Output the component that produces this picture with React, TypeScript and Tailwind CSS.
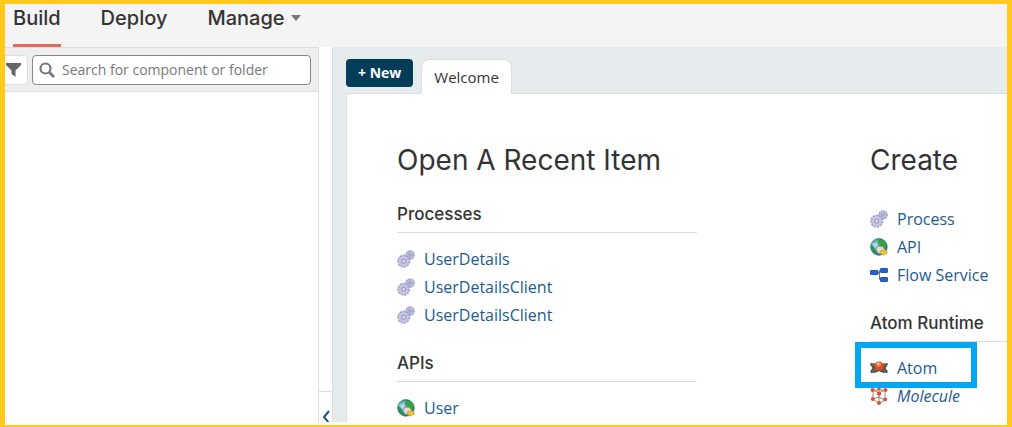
import { ReactNode } from "react";

const headingFont = "font-['Inter','Open_Sans',sans-serif]";

function ProcessIcon() {
  return (
    <svg viewBox="0 0 18 18" className="size-[18px] shrink-0" aria-hidden="true">
      <circle cx="13" cy="5" r="4" fill="#a9a9cf" stroke="#a0a0c0" strokeWidth="1.6" strokeDasharray="1.6 0.7" />
      <circle cx="13" cy="5" r="3.6" fill="#bcbce0" />
      <circle cx="13" cy="5" r="1.3" fill="#d0d0e8" stroke="#8585aa" strokeWidth="0.7" />
      <circle cx="6.7" cy="11.2" r="5.6" fill="#b4b4da" stroke="#a0a0c0" strokeWidth="1.8" strokeDasharray="2.2 0.9" />
      <circle cx="6.7" cy="11.2" r="5.2" fill="#c3c3e6" />
      <circle cx="6.7" cy="11.2" r="2" fill="#dcdcee" stroke="#8a8ab0" strokeWidth="0.9" />
    </svg>
  );
}

function ApiIcon() {
  return (
    <svg viewBox="0 0 18 18" className="size-[18px] shrink-0" aria-hidden="true">
      <defs>
        <radialGradient id="globe" cx="0.3" cy="0.4" r="0.7">
          <stop offset="0" stopColor="#cfe8f8" />
          <stop offset="0.5" stopColor="#4b98d0" />
          <stop offset="1" stopColor="#145084" />
        </radialGradient>
      </defs>
      <circle cx="8.9" cy="8.9" r="8.3" fill="url(#globe)" stroke="#2b6f78" strokeWidth="0.7" />
      <path d="M8.500 1.500 13 2l3.500 4-.3 5-2.700-.5-2-2.500-2.500-.5L8 5z" fill="#36a33f" />
      <path d="M1 7.500 3 8l2 3 2 5-4-1.500-1.700-3z" fill="#2d8f48" />
      <path d="m3 3.500 3-2 1.500.5L5 5z" fill="#5bb866" />
      <path d="m6 11.500 1.500-3.500 5 .5 2.700 3.500-2 4-5-.5z" fill="#deded9" stroke="#85867c" strokeWidth="0.8" />
      <path d="m9.500 15 1.700-3 1.800 1 1.200-2 3.300 3-1.200 2-1.500-.5-1 1.700z" fill="#f2c634" stroke="#b98f1c" strokeWidth="0.6" />
    </svg>
  );
}

function FlowIcon() {
  return (
    <svg viewBox="0 0 18 18" className="size-[18px] shrink-0" aria-hidden="true">
      <path d="M8 6.500h2m1.500-2H9.500v9h2" fill="none" stroke="#6a7280" />
      <rect x="0.5" y="4.5" width="7.500" height="4" rx="0.5" fill="#1d63dc" stroke="#2d559a" />
      <rect x="10.5" y="2.5" width="7" height="4" rx="0.5" fill="#1d63dc" stroke="#2d559a" />
      <rect x="10.5" y="11.5" width="7" height="4" rx="0.5" fill="#1d63dc" stroke="#2d559a" />
    </svg>
  );
}

function AtomIcon() {
  return (
    <svg viewBox="0 0 18 18" className="size-[18px] shrink-0" aria-hidden="true">
      <path d="M.5 4 5 4.500l4 2 4-2 4.500-.5.2 2-2.200 3 2.200 3-.5 2-4.200-.3-4-1.500-4 1.500-4.300.3-.4-2 2.200-3L.3 6z" fill="#56504d" />
      <path d="m2 5.500 14 7M16 5.500l-14 7" stroke="#85807c" strokeWidth="0.8" />
      <circle cx="9" cy="7" r="4.6" fill="#e04e1c" />
      <circle cx="8.6" cy="5.4" r="2.4" fill="#fb8752" />
      <circle cx="8.2" cy="4.7" r="1" fill="#ffd0b5" />
    </svg>
  );
}

function MoleculeIcon() {
  return (
    <svg viewBox="0 0 18 18" className="size-[18px] shrink-0" aria-hidden="true">
      <path d="M3 3h12v10l-6 3.500L3 12zM3 3l6 3 6-3M9 6v10M3 12l6-2 6 3" fill="none" stroke="#888" />
      <g fill="#e2512c">
        <circle cx="2.5" cy="3" r="2" />
        <circle cx="9" cy="1.800" r="1.800" />
        <circle cx="15.5" cy="3" r="2" />
        <circle cx="9" cy="6.500" r="2.200" />
        <circle cx="2.800" cy="12" r="2" />
        <circle cx="15.200" cy="12.500" r="2" />
        <circle cx="9" cy="16" r="2" />
      </g>
    </svg>
  );
}

function ItemLink({ icon, children }: { icon: ReactNode; children: ReactNode }) {
  return (
    <li className="h-7">
      <a href="#" className="inline-flex h-7 items-center gap-[9px] whitespace-nowrap text-base text-[#1a5b93]">
        {icon}
        <span>{children}</span>
      </a>
    </li>
  );
}

function Section({ title, className = "", children }: { title: string; className?: string; children: ReactNode }) {
  return (
    <section className={className}>
      <h3 className={`${headingFont} h-8 whitespace-nowrap border-b border-[#ddd] text-[17px] leading-[26px] font-medium text-[#333]`}>
        {title}
      </h3>
      <ul className="pt-3">{children}</ul>
    </section>
  );
}

export default function App() {
  return (
    <div className="flex h-screen flex-col overflow-hidden border-x-[5px] border-t-4 border-b-2 border-[#ffca1b] bg-white pb-[3px] font-['Open_Sans',sans-serif] text-[#333]">
      <header className="h-[43px] shrink-0 bg-[#f4f4f4] pl-2">
        <nav className={`${headingFont} flex h-full gap-10 text-xl leading-7 font-medium`}>
          <a href="#" className="border-b-[3px] border-[#e26b5d]">Build</a>
          <a href="#">Deploy</a>
          <button type="button" className="flex h-7 items-center gap-[6px]">
            Manage
            <svg viewBox="0 0 10 6" className="h-[6px] w-[10px]" aria-hidden="true">
              <path d="M0 0h10L5 6z" fill="#777" />
            </svg>
          </button>
        </nav>
      </header>
      <div className="flex min-h-0 flex-1">
        {/* Component explorer */}
        <aside className="w-[314px] shrink-0 border-r border-[#ddd]">
          <div className="flex h-[45px] items-center gap-1 border-y border-[#ddd] bg-[#eee] pr-[7px]">
            <button type="button" aria-label="Filter" className="flex h-[30px] w-[23px] items-center rounded-r border border-l-0 border-[#ddd] bg-white pl-px">
              <svg viewBox="0 0 15 14" className="h-[14px] w-[15px]" aria-hidden="true">
                <path d="M0 0h15v2L9.500 7.500V14L5.500 11V7.500L0 2z" fill="#666" />
              </svg>
            </button>
            <label className="flex h-[30px] min-w-0 flex-1 items-center gap-[7px] rounded-sm border border-[#888] bg-white pl-[6px]">
              <svg viewBox="0 0 16 16" className="size-4 shrink-0" aria-hidden="true">
                <circle cx="6.500" cy="6.500" r="5" fill="none" stroke="#777" strokeWidth="2.200" />
                <path d="m10.500 10.500 4.500 4.500" stroke="#777" strokeWidth="2.600" />
              </svg>
              <input
                type="text"
                aria-label="Search"
                placeholder="Search for component or folder"
                className="min-w-0 flex-1 text-sm outline-none placeholder:text-[#777]"
              />
            </label>
          </div>
        </aside>
        <div className="flex w-[13px] shrink-0 flex-col justify-end">
          <button type="button" aria-label="Collapse" className="flex h-[31px] items-end justify-center overflow-hidden border-t border-[#ddd]">
            <svg viewBox="0 0 8 12" className="h-3 w-2" aria-hidden="true">
              <path d="M7 1 2 7l5 6" fill="none" stroke="#17568c" strokeWidth="2" />
            </svg>
          </button>
        </div>
        <main className="flex min-w-0 flex-1 flex-col border-l border-[#ddd] bg-[#e6ebee] pt-3 pl-[13px]">
          <div className="relative z-10 -mb-px flex h-[35px] shrink-0 gap-2">
            <button type="button" className="h-7 rounded-sm bg-[#033d58] px-3 text-sm font-bold text-white">+ New</button>
            <button type="button" className="h-[35px] rounded-t-lg border border-b-0 border-[#ddd] bg-white px-3 text-[15px]">Welcome</button>
          </div>
          <div className="flex min-h-0 flex-1 justify-between overflow-hidden border-t border-l border-[#ddd] bg-white pt-12 pl-[50px]">
            <div className="w-[300px]">
              <h2 className={`${headingFont} mb-[23px] text-[28px] leading-9`}>Open A Recent Item</h2>
              <Section title="Processes">
                <ItemLink icon={<ProcessIcon />}>UserDetails</ItemLink>
                <ItemLink icon={<ProcessIcon />}>UserDetailsClient</ItemLink>
                <ItemLink icon={<ProcessIcon />}>UserDetailsClient</ItemLink>
              </Section>
              <Section title="APIs" className="mt-[21px]">
                <ItemLink icon={<ApiIcon />}>User</ItemLink>
              </Section>
            </div>
            <div className="w-[137px]">
              <h2 className={`${headingFont} mb-[27px] text-[28px] leading-9`}>Create</h2>
              <ul>
                <ItemLink icon={<ProcessIcon />}>Process</ItemLink>
                <ItemLink icon={<ApiIcon />}>API</ItemLink>
                <ItemLink icon={<FlowIcon />}>Flow Service</ItemLink>
              </ul>
              <Section title="Atom Runtime" className="relative mt-[21px]">
                <ItemLink icon={<AtomIcon />}>Atom</ItemLink>
                <ItemLink icon={<MoleculeIcon />}><em>Molecule</em></ItemLink>
                {/* Highlight box around the Atom link */}
                <span className="pointer-events-none absolute top-8 -left-[15px] h-[46px] w-[122px] border-6 border-[#00a8f3]" />
              </Section>
            </div>
          </div>
        </main>
      </div>
    </div>
  );
}
